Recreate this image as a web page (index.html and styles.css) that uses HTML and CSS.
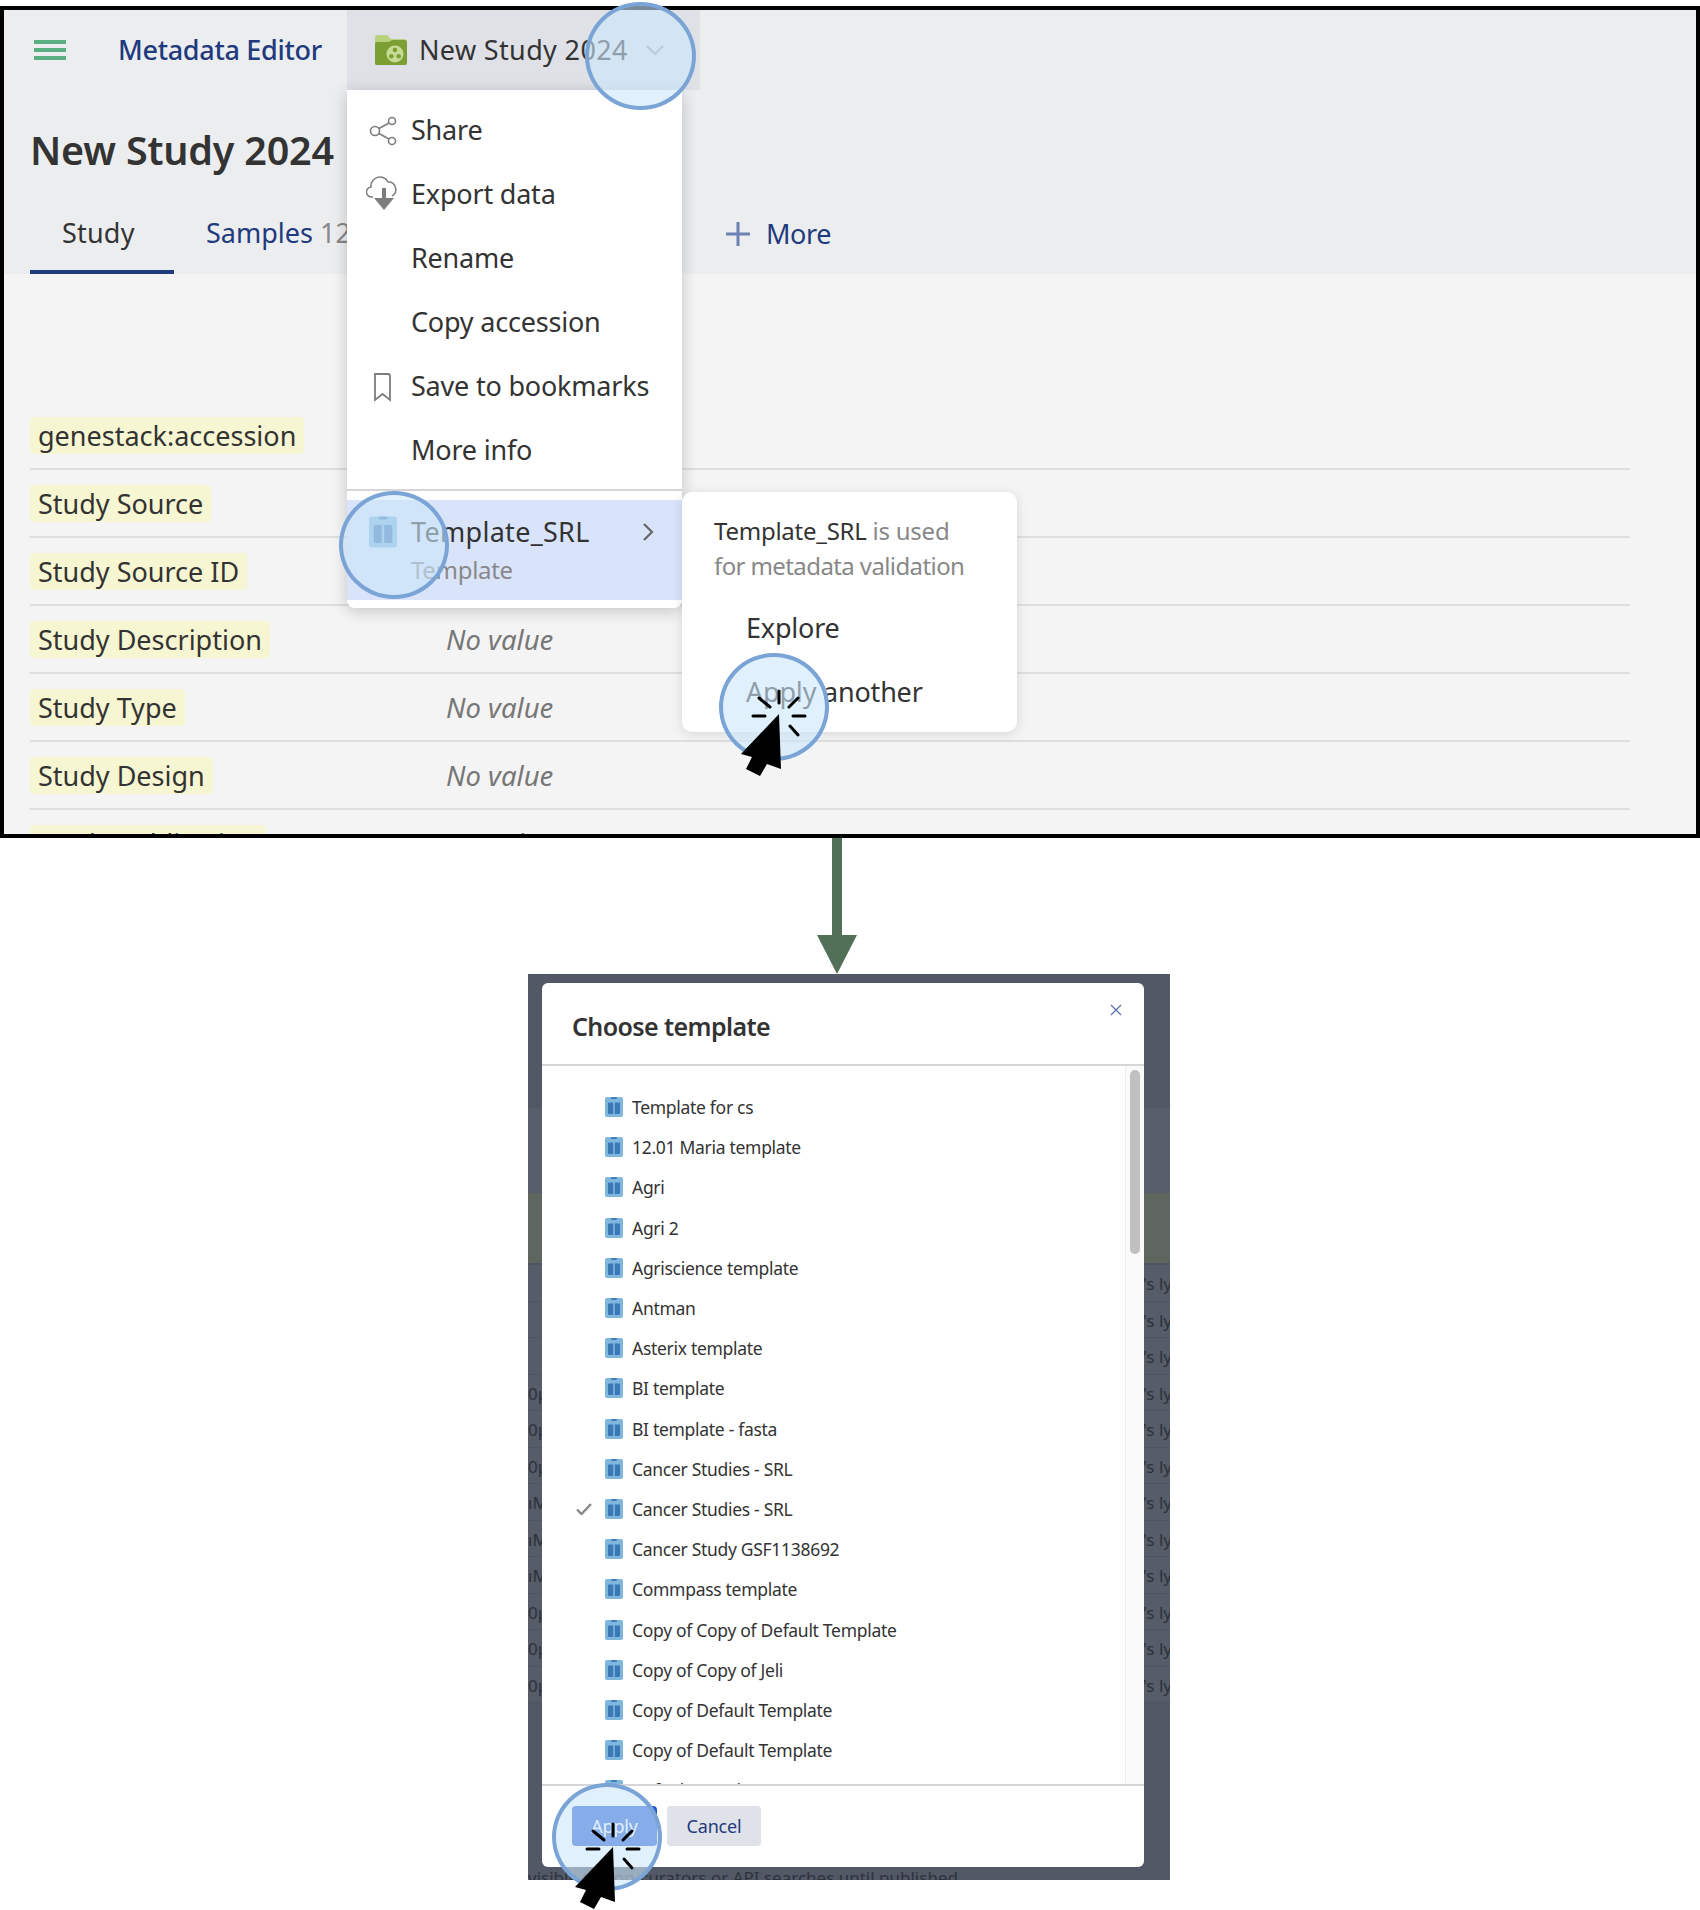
FILE: index.html
```html
<!DOCTYPE html>
<html lang="en">
<head>
<meta charset="utf-8">
<title>Metadata Editor</title>
<link rel="stylesheet" href="styles.css">
</head>
<body>
<svg class="defs" aria-hidden="true">
  <symbol id="tpl" viewBox="0 0 18 20">
    <rect width="18" height="20" rx="2" fill="#7fb6de"/>
    <rect x="6" y="0" width="6" height="2" rx="1" fill="#3f7fb8"/>
    <path d="M3 6.500a1 1 0 0 1 1-1h4.200V17H4a1 1 0 0 1-1-1zM9.800 5.500H14a1 1 0 0 1 1 1V16a1 1 0 0 1-1 1H9.800z" fill="#3a79b3"/>
  </symbol>
  <symbol id="click" viewBox="-45 -30 90 100">
    <path d="M0 0-38 40-27 43-33 55-19 62-12 50 2 55z" fill="#000"/>
    <path d="M0-23V-11M-20-16-9-7M19-16 10-7M-26 2H-14M14 2H26M11 12 19 21" stroke="#000" stroke-width="3" stroke-linecap="round" fill="none"/>
  </symbol>
</svg>

<div class="page">
  <section class="frame">
    <header class="head">
      <div class="topbar">
        <div class="brand">
          <span class="burger"><i></i><i></i><i></i></span>
          <span class="brand-name">Metadata Editor</span>
        </div>
        <div class="trigger">
          <svg class="folder" viewBox="0 0 32 30">
            <path d="M0 3a3 3 0 0 1 3-3h9l4 4h13a3 3 0 0 1 3 3v10H0z" fill="#b9d37c"/>
            <path d="M0 9q0-2 2-2h12l3-2h13q2 0 2 2v21q0 2-2 2H1l-1-1z" fill="#7b9f33"/>
            <circle cx="20" cy="19" r="8.500" fill="#c6dc94"/>
            <circle cx="20" cy="15" r="2.300" fill="#7b9f33"/>
            <circle cx="16.300" cy="21.300" r="2.300" fill="#7b9f33"/>
            <circle cx="23.700" cy="21.300" r="2.300" fill="#7b9f33"/>
          </svg>
          <span class="trigger-name">New Study 2024</span>
          <svg class="chev" viewBox="0 0 18 10"><path d="M1 1l8 8 8-8" fill="none" stroke="#9aa6af" stroke-width="2"/></svg>
        </div>
      </div>
      <h1 class="title">New Study 2024</h1>
      <nav class="tabs">
        <a class="tab tab-on">Study</a>
        <a class="tab">Samples <span class="count">12</span></a>
        <a class="tab tab-more">
          <svg class="plus" viewBox="0 0 24 24"><path d="M12 0v24M0 12h24" stroke="#6b82b3" stroke-width="3"/></svg>
          <span>More</span>
        </a>
      </nav>
    </header>

    <div class="fields">
      <div class="row"><span class="pill">genestack:accession</span></div>
      <div class="row"><span class="pill">Study Source</span></div>
      <div class="row"><span class="pill">Study Source ID</span></div>
      <div class="row"><span class="pill">Study Description</span><span class="none">No value</span></div>
      <div class="row"><span class="pill">Study Type</span><span class="none">No value</span></div>
      <div class="row"><span class="pill">Study Design</span><span class="none">No value</span></div>
      <div class="row"><span class="pill">Study Publication</span><span class="none">No value</span></div>
    </div>

    <div class="menu">
      <div class="mi">
        <svg class="mi-ico" viewBox="0 0 28 30" fill="none" stroke="#7d7d7d" stroke-width="1.600">
          <circle cx="6" cy="15" r="4.500"/><circle cx="23" cy="5" r="3.500"/><circle cx="23" cy="25" r="3.500"/>
          <path d="M10 12.500 20 7M10 17.500 20 23"/>
        </svg>Share
      </div>
      <div class="mi">
        <svg class="mi-ico mi-ico-cloud" viewBox="0 0 32 34" fill="none" stroke="#7d7d7d" stroke-width="1.500">
          <path d="M7 21H6a5 5 0 0 1-1-10 9 9 0 0 1 17-5 7.500 7.500 0 0 1 4 14"/>
          <path d="M18 12v13" stroke-width="4"/>
          <path d="M8 22h20L18 34z" fill="#7d7d7d" stroke="none"/>
        </svg>Export data
      </div>
      <div class="mi">Rename</div>
      <div class="mi">Copy accession</div>
      <div class="mi">
        <svg class="mi-ico" viewBox="0 0 28 30" fill="none" stroke="#7d7d7d" stroke-width="1.800">
          <path d="M6 2h13a2 2 0 0 1 2 2v24l-7.500-6L6 28a0 0 0 0 1 0 0V4a2 2 0 0 1 0-2z"/>
        </svg>Save to bookmarks
      </div>
      <div class="mi">More info</div>
      <div class="menu-line"></div>
      <div class="sel">
        <svg class="sel-ico"><use href="#tpl"/></svg>
        <div class="sel-text">
          <div class="sel-name">Template_SRL</div>
          <div class="sel-type">Template</div>
        </div>
        <svg class="sel-chev" viewBox="0 0 12 20"><path d="M2 2l8 8-8 8" fill="none" stroke="#666" stroke-width="2.200"/></svg>
      </div>
    </div>

    <div class="submenu">
      <p class="sub-note"><b>Template_SRL</b> is used<br><span class="sub-line">for metadata validation</span></p>
      <div class="sub-item">Explore</div>
      <div class="sub-item">Apply another</div>
    </div>
  </section>

  <div class="lower">
    <svg class="connector" viewBox="0 0 40 136">
      <path d="M15 0h10v97h15l-20 39-20-39h15z" fill="#527058"/>
    </svg>
    <section class="shot">
      <div class="bg-a"></div>
      <div class="bg-b"></div>
      <div class="bg-band"></div>
      <div class="bg-rows">
        <div class="bg-row"><span></span><span>'s lysate</span></div>
        <div class="bg-row"><span></span><span>'s lysate</span></div>
        <div class="bg-row"><span></span><span>'s lysate</span></div>
        <div class="bg-row"><span>0µl</span><span>'s lysate</span></div>
        <div class="bg-row"><span>0µl</span><span>'s lysate</span></div>
        <div class="bg-row"><span>0µl</span><span>'s lysate</span></div>
        <div class="bg-row"><span>ıM</span><span>'s lysate</span></div>
        <div class="bg-row"><span>ıM</span><span>'s lysate</span></div>
        <div class="bg-row"><span>ıM</span><span>'s lysate</span></div>
        <div class="bg-row"><span>0µl</span><span>'s lysate</span></div>
        <div class="bg-row"><span>0µl</span><span>'s lysate</span></div>
        <div class="bg-row"><span>0µl</span><span>'s lysate</span></div>
      </div>
      <div class="bg-note">visible to non-curators or API searches until published.</div>

      <div class="dialog">
        <div class="dlg-head">
          <h2 class="dlg-title">Choose template</h2>
          <svg class="dlg-x" viewBox="0 0 12 12"><path d="M1 1l10 10M11 1 1 11" stroke="#5b73ad" stroke-width="1.300"/></svg>
        </div>
        <div class="dlg-body">
          <ul class="list">
            <li class="li"><span class="tick"></span><svg class="li-ico"><use href="#tpl"/></svg>Template for cs</li>
            <li class="li"><span class="tick"></span><svg class="li-ico"><use href="#tpl"/></svg>12.01 Maria template</li>
            <li class="li"><span class="tick"></span><svg class="li-ico"><use href="#tpl"/></svg>Agri</li>
            <li class="li"><span class="tick"></span><svg class="li-ico"><use href="#tpl"/></svg>Agri 2</li>
            <li class="li"><span class="tick"></span><svg class="li-ico"><use href="#tpl"/></svg>Agriscience template</li>
            <li class="li"><span class="tick"></span><svg class="li-ico"><use href="#tpl"/></svg>Antman</li>
            <li class="li"><span class="tick"></span><svg class="li-ico"><use href="#tpl"/></svg>Asterix template</li>
            <li class="li"><span class="tick"></span><svg class="li-ico"><use href="#tpl"/></svg>BI template</li>
            <li class="li"><span class="tick"></span><svg class="li-ico"><use href="#tpl"/></svg>BI template - fasta</li>
            <li class="li"><span class="tick"></span><svg class="li-ico"><use href="#tpl"/></svg>Cancer Studies - SRL</li>
            <li class="li"><span class="tick"><svg class="tick-ico" viewBox="0 0 16 12"><path d="M1 6.500 5.500 11 15 1" fill="none" stroke="#888" stroke-width="2.400"/></svg></span><svg class="li-ico"><use href="#tpl"/></svg>Cancer Studies - SRL</li>
            <li class="li"><span class="tick"></span><svg class="li-ico"><use href="#tpl"/></svg>Cancer Study GSF1138692</li>
            <li class="li"><span class="tick"></span><svg class="li-ico"><use href="#tpl"/></svg>Commpass template</li>
            <li class="li"><span class="tick"></span><svg class="li-ico"><use href="#tpl"/></svg>Copy of Copy of Default Template</li>
            <li class="li"><span class="tick"></span><svg class="li-ico"><use href="#tpl"/></svg>Copy of Copy of Jeli</li>
            <li class="li"><span class="tick"></span><svg class="li-ico"><use href="#tpl"/></svg>Copy of Default Template</li>
            <li class="li"><span class="tick"></span><svg class="li-ico"><use href="#tpl"/></svg>Copy of Default Template</li>
            <li class="li"><span class="tick"></span><svg class="li-ico"><use href="#tpl"/></svg>Default template</li>
          </ul>
          <div class="scroll"><div class="thumb"></div></div>
        </div>
        <div class="dlg-foot">
          <button class="btn btn-apply">Apply</button>
          <button class="btn btn-cancel">Cancel</button>
        </div>
      </div>
    </section>
  </div>

  <div class="halo halo-chevron"></div>
  <div class="halo halo-template"></div>
  <div class="halo halo-another"></div>
  <div class="halo halo-apply"></div>
  <svg class="pointer pointer-another"><use href="#click"/></svg>
  <svg class="pointer pointer-apply"><use href="#click"/></svg>
</div>
</body>
</html>
```

FILE: styles.css
```css
* { box-sizing: border-box; }
html, body { margin: 0; padding: 0; background: #fff; }
body { font-family: "Noto Sans", "Liberation Sans", sans-serif; color: #333; }
.defs { position: absolute; width: 0; height: 0; }
.page { position: relative; width: 1700px; height: 1910px; padding-top: 6px; overflow: hidden; }

/* top screenshot */
.frame { position: relative; height: 832px; border: 4px solid #000; background: #f4f4f4; overflow: hidden; }
.head { height: 264px; background: #ecedef; }
.topbar { display: grid; grid-template-columns: 343px 353px; height: 80px; }
.brand { display: flex; align-items: center; padding: 0 0 2px 30px; gap: 52px; }
.burger { display: flex; flex-direction: column; gap: 4px; width: 32px; margin-top: 2px; }
.burger i { display: block; height: 4px; background: #5bb083; }
.brand-name { font-size: 27px; font-weight: 500; color: #1f3a7d; letter-spacing: -.3px; white-space: nowrap; }
.trigger { display: flex; align-items: center; background: #dfe1e7; padding: 0 0 2px 28px; }
.folder { width: 32px; height: 30px; margin: 2px 12px 0 0; }
.trigger-name { font-size: 27px; letter-spacing: .35px; white-space: nowrap; }
.chev { width: 18px; height: 10px; margin: 2px 0 0 18px; }
.title { margin: 30px 0 0 26px; font-size: 39.500px; line-height: 60px; font-weight: 600; letter-spacing: -.2px; height: 60px; }
.tabs { display: grid; grid-template-columns: 144px 552px auto; grid-auto-rows: 80px; margin: 14px 0 0 26px; height: 80px; }
.tab { display: block; height: 80px; padding-left: 32px; font-size: 27px; line-height: 78px; color: #1f3a7d; white-space: nowrap; border-bottom: 4px solid transparent; }
.tab-on { color: #333; border-bottom-color: #1f3a7d; letter-spacing: .2px; }
.count { color: #888; }
.tab-more { display: flex; align-items: center; padding: 4px 0 0; gap: 16px; letter-spacing: -.4px; }
.plus { width: 24px; height: 24px; }

.fields { padding: 128px 66px 0 26px; }
.row { display: grid; grid-template-columns: 416px auto; align-items: start; height: 68px; padding-top: 15px; border-bottom: 2px solid #dedede; }
.pill { justify-self: start; height: 37px; padding: 0 8px; line-height: 38px; background: #f7f6d2; border-radius: 4px; font-size: 27px; white-space: nowrap; }
.none { font-style: italic; font-size: 27.500px; line-height: 37px; color: #777; }

.menu { position: absolute; left: 343px; top: 80px; width: 335px; height: 518px; padding-top: 7px; background: #fff; border-radius: 0 0 8px 8px; box-shadow: 0 3px 16px rgba(0,0,0,.2); font-size: 27px; }
.mi { position: relative; display: flex; align-items: center; height: 64px; padding-left: 64px; letter-spacing: -.2px; white-space: nowrap; }
.mi-ico { position: absolute; left: 22px; top: 19px; width: 28px; height: 30px; }
.mi-ico-cloud { left: 19px; top: 15px; width: 32px; height: 34px; }
.menu-line { height: 2px; margin-top: 8px; background: #d5d5d8; }
.sel { position: relative; display: flex; align-items: flex-start; height: 100px; margin-top: 9px; background: #d9e4fb; padding: 16px 0 0 22px; }
.sel-ico { width: 28px; height: 32px; margin-right: 14px; }
.sel-name { font-size: 27px; line-height: 32px; letter-spacing: .3px; }
.sel-type { margin-top: 8px; font-size: 24px; line-height: 28px; color: #888; letter-spacing: -.3px; }
.sel-chev { position: absolute; right: 28px; top: 22px; width: 12px; height: 20px; }

.submenu { position: absolute; left: 678px; top: 482px; width: 335px; height: 240px; padding: 20px 0 0 32px; background: #fff; border-radius: 10px; box-shadow: 0 2px 12px rgba(0,0,0,.12); }
.sub-note { margin: 0 0 9px; font-size: 24px; line-height: 37px; color: #888; letter-spacing: -.25px; white-space: nowrap; }
.sub-note b { font-weight: 400; color: #333; }
.sub-line { letter-spacing: -.6px; display: inline-block; transform: translateY(-2px); }
.sub-item { display: flex; align-items: center; height: 64px; padding-left: 32px; font-size: 27px; letter-spacing: -.2px; }

/* connector */
.lower { display: flex; flex-direction: column; padding-left: 528px; }
.connector { display: block; width: 40px; height: 136px; margin-left: 289px; }

/* lower screenshot */
.shot { position: relative; display: flex; flex-direction: column; width: 642px; height: 906px; background: #525866; overflow: hidden; color: #2d323c; font-size: 17px; }
.bg-a { height: 134px; flex: none; }
.bg-b { height: 85px; flex: none; background: #575d69; }
.bg-band { height: 72px; flex: none; background: #5f6660; border-bottom: 2px solid #4e5460; }
.bg-rows { flex: none; background: #565c68; }
.bg-row { display: grid; grid-template-columns: 615px 27px; height: 36.5px; line-height: 38px; border-bottom: 1px solid #4e5460; white-space: nowrap; }
.bg-row span { overflow: hidden; }
.bg-note { position: absolute; left: 0; top: 890px; line-height: 28px; white-space: nowrap; font-size: 17px; }

.dialog { position: absolute; left: 14px; top: 9px; display: flex; flex-direction: column; width: 602px; height: 884px; background: #fff; border-radius: 6px; color: #333; }
.dlg-head { position: relative; flex: none; height: 83px; border-bottom: 2px solid #d6d6da; padding: 21px 0 0 30px; }
.dlg-title { margin: 0; font-size: 25px; line-height: 44px; font-weight: 600; letter-spacing: -.6px; }
.dlg-x { position: absolute; right: 22px; top: 21px; width: 12px; height: 12px; }
.dlg-body { flex: 1; display: flex; min-height: 0; overflow: hidden; }
.list { flex: 1; margin: 0; padding: 21px 0 0 35px; list-style: none; }
.li { display: flex; align-items: center; height: 40.2px; font-size: 17.500px; letter-spacing: -.3px; white-space: nowrap; }
.tick { display: flex; width: 28px; }
.tick-ico { width: 16px; height: 12px; margin-left: -1px; }
.li-ico { width: 18px; height: 20px; margin-right: 9px; }
.scroll { flex: none; width: 19px; background: #fafafa; border-left: 1px solid #ececec; padding: 4px 0 0 4px; }
.thumb { width: 10px; height: 184px; background: #c0c0c0; border-radius: 5px; }
.dlg-foot { flex: none; display: flex; align-items: center; gap: 10px; height: 83px; padding: 0 0 2px 30px; border-top: 2px solid #d6d6da; }
.btn { height: 40px; border: 0; border-radius: 4px; font: inherit; font-size: 18px; letter-spacing: -.2px; }
.btn-apply { width: 85px; background: #1f55cf; color: #fff; }
.btn-cancel { width: 94px; background: #dfe2e8; color: #1f3a7d; }

/* annotations */
.halo { position: absolute; width: 110px; height: 108px; border: 4px solid #7aa3d6; border-radius: 50%; background: rgba(203,230,250,.6); }
.halo-chevron { left: 585px; top: 2px; width: 111px; }
.halo-template { left: 339px; top: 491px; }
.halo-another { left: 719px; top: 653px; }
.halo-apply { left: 552px; top: 1783px; }
.pointer { position: absolute; width: 90px; height: 100px; }
.pointer-another { left: 734px; top: 684px; }
.pointer-apply { left: 568px; top: 1817px; }
```
